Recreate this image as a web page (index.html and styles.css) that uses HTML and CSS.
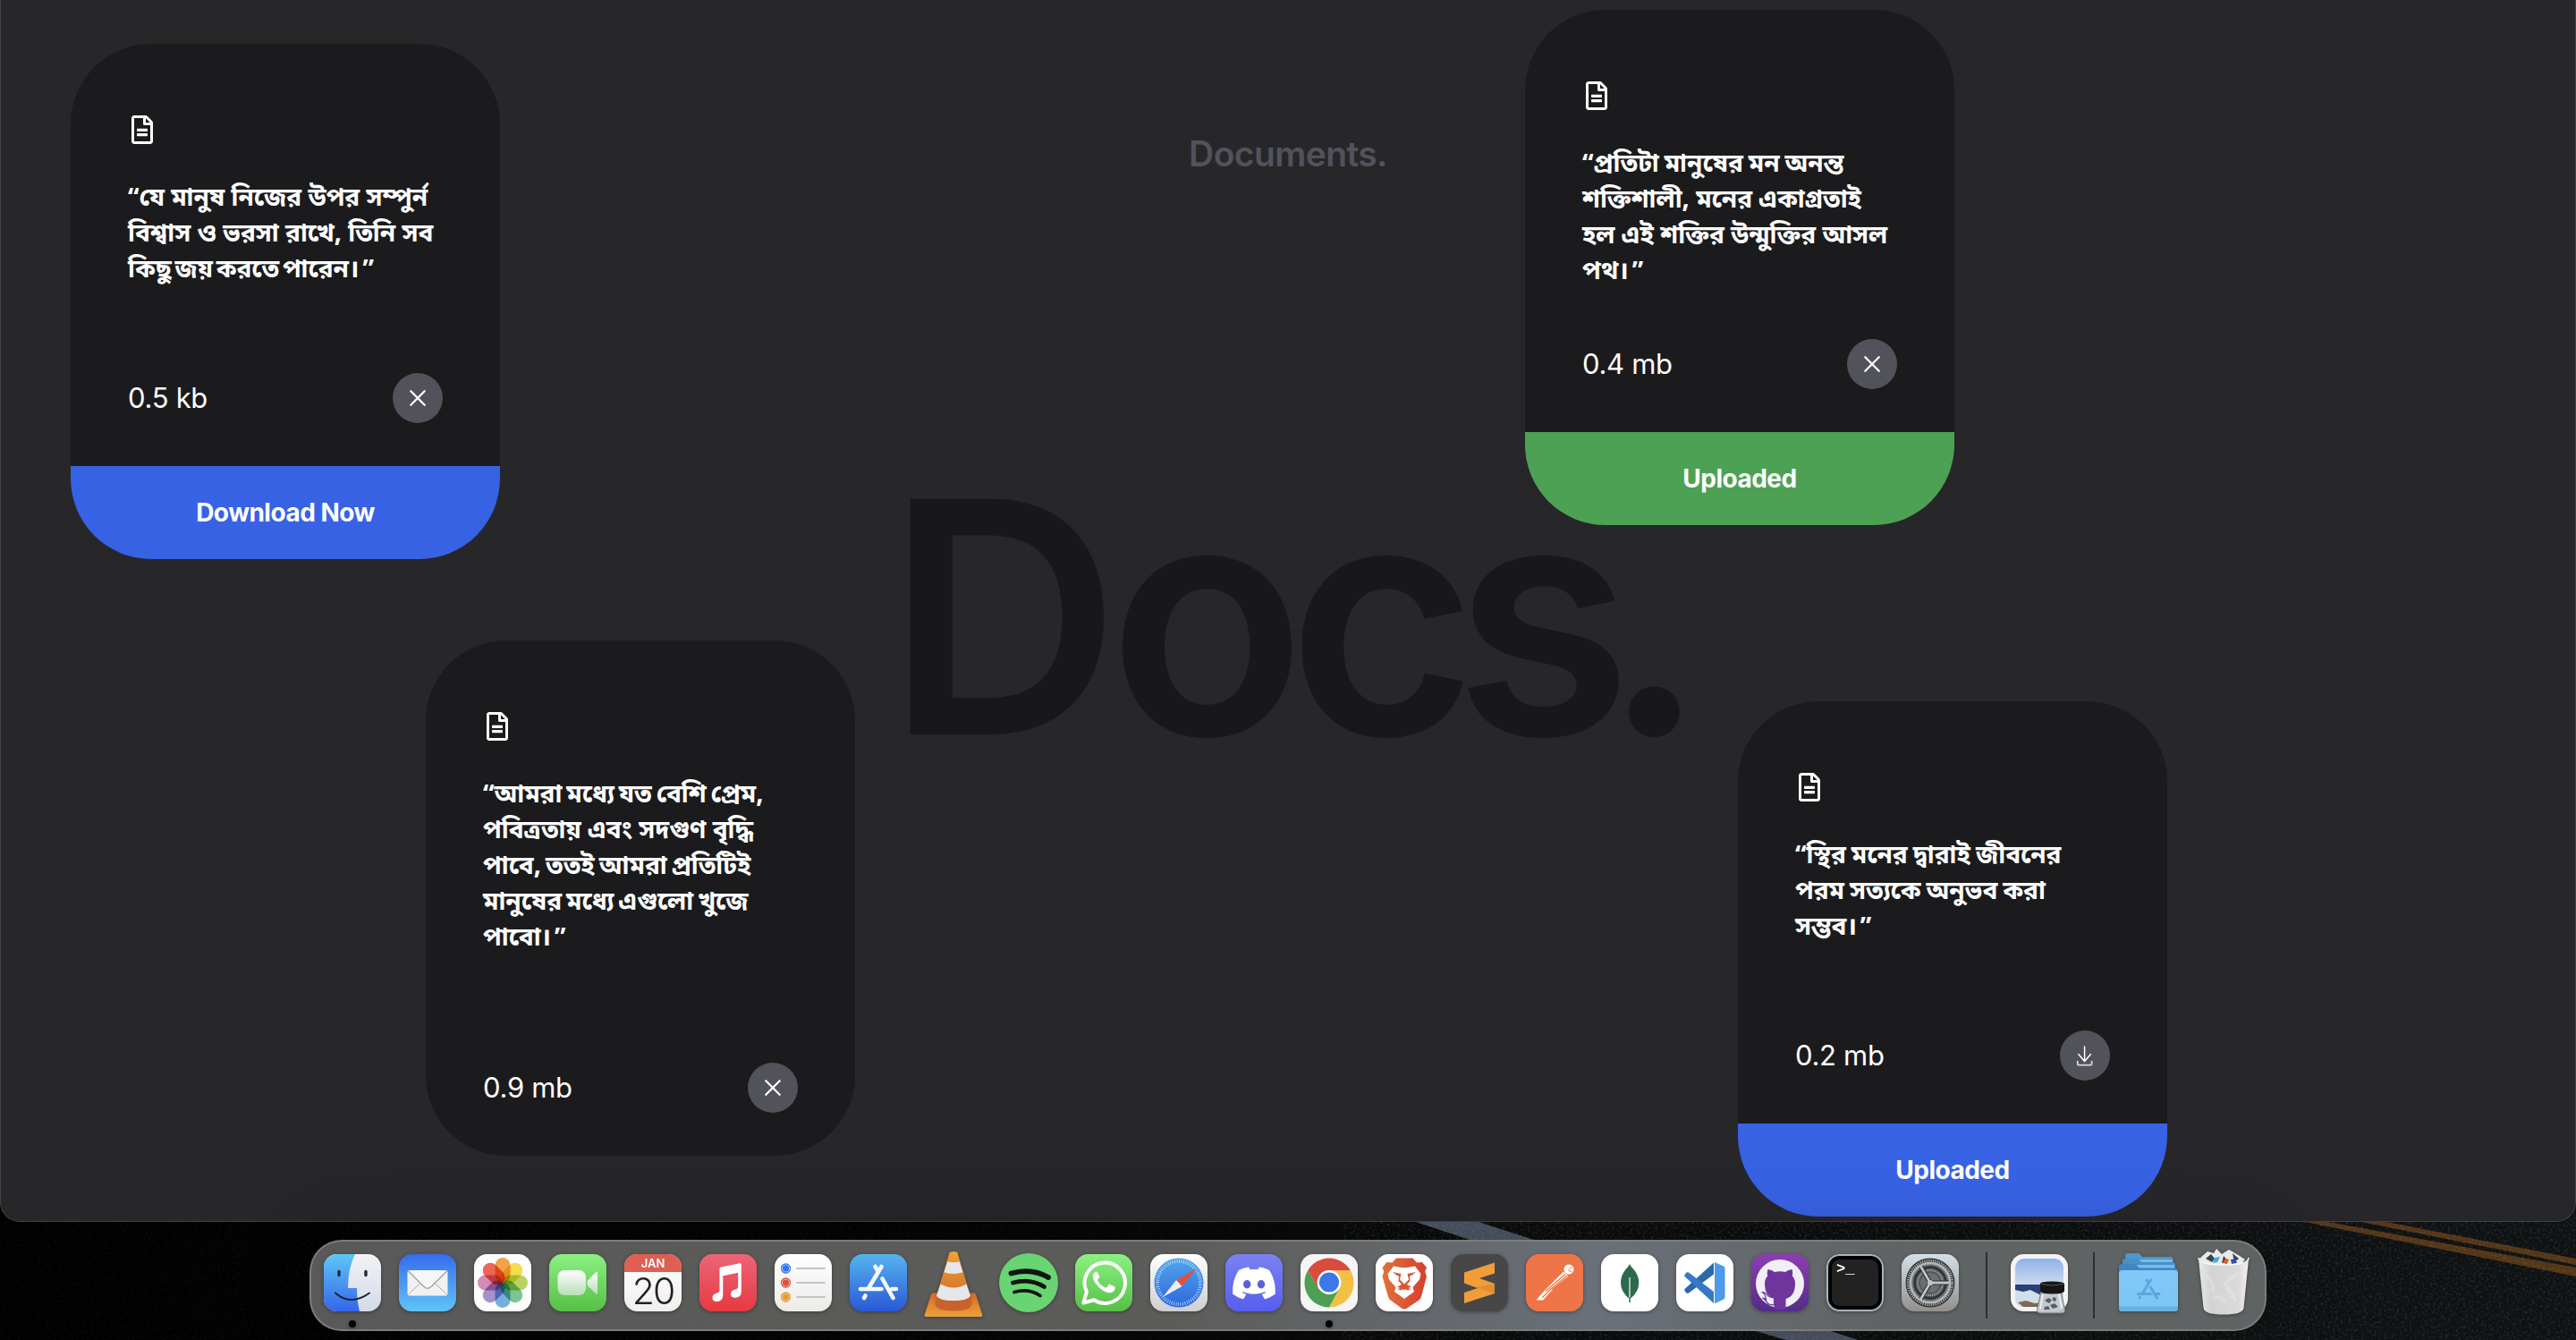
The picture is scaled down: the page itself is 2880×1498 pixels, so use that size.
FILE: index.html
```html
<!DOCTYPE html>
<html lang="en">
<head>
<meta charset="utf-8">
<title>Documents.</title>
<link rel="stylesheet" href="styles.css">
</head>
<body>
<svg class="defs" width="0" height="0" aria-hidden="true">
  <defs>
    <symbol id="file" viewBox="0 0 384 512"><path fill="currentColor" d="M288 248v28c0 6.600-5.400 12-12 12H108c-6.600 0-12-5.400-12-12v-28c0-6.600 5.400-12 12-12h168c6.600 0 12 5.400 12 12zm-12 72H108c-6.600 0-12 5.400-12 12v28c0 6.600 5.400 12 12 12h168c6.600 0 12-5.400 12-12v-28c0-6.600-5.400-12-12-12zm108-188.100V464c0 26.500-21.500 48-48 48H48c-26.500 0-48-21.500-48-48V48C0 21.500 21.500 0 48 0h204.100C264.800 0 277 5.100 286 14.100L369.900 98c9 8.900 14.100 21.200 14.100 33.900zm-128-80V128h76.100L256 51.900zM336 464V176H232c-13.300 0-24-10.700-24-24V48H48v416h288z"/></symbol>
    <symbol id="close" viewBox="0 0 36 36"><path d="M10.300 10.300 25.700 25.700M25.700 10.300 10.300 25.700" fill="none" stroke="currentColor" stroke-width="2.300" stroke-linecap="round"/></symbol>
    <symbol id="download" viewBox="0 0 36 36"><path d="M17.600 8v16.500M10.800 16.600l6.800 8 6.800-8" fill="none" stroke="currentColor" stroke-width="1.500" stroke-linecap="round" stroke-linejoin="round"/><path d="M9.800 24.600v2.900q0 1.200 1.200 1.200h13.400q1.200 0 1.200-1.200v-2.900" fill="none" stroke="#d8d8da" stroke-width="1.800" stroke-linecap="round"/></symbol>
    <linearGradient id="gFinderL" x2="0" y2="1"><stop stop-color="#5ec6f7"/><stop offset="1" stop-color="#3466ea"/></linearGradient>
    <linearGradient id="gFinderR" x2="0" y2="1"><stop stop-color="#f2f3f5"/><stop offset="1" stop-color="#d3daea"/></linearGradient>
    <linearGradient id="gMail" x2="0" y2="1"><stop stop-color="#376ceb"/><stop offset="1" stop-color="#5fc4f8"/></linearGradient>
    <linearGradient id="gGreen" x2="0" y2="1"><stop stop-color="#8bf082"/><stop offset="1" stop-color="#57bf46"/></linearGradient>
    <linearGradient id="gSoft" x2="0" y2="1"><stop stop-color="#fff"/><stop offset="1" stop-color="#b9ddb7"/></linearGradient>
    <linearGradient id="gPaper" x2="0" y2="1"><stop stop-color="#fff"/><stop offset="1" stop-color="#edebe8"/></linearGradient>
    <linearGradient id="gMusic" x2="0" y2="1"><stop stop-color="#ec6578"/><stop offset="1" stop-color="#e63a40"/></linearGradient>
    <linearGradient id="gStore" x2="0" y2="1"><stop stop-color="#56b4ee"/><stop offset="1" stop-color="#2a58d5"/></linearGradient>
    <linearGradient id="gCone" x2="0" y2="1"><stop stop-color="#f0a337"/><stop offset="1" stop-color="#cf6c2b"/></linearGradient>
    <linearGradient id="gBase" x2="0" y2="1"><stop stop-color="#d2692c"/><stop offset="1" stop-color="#eda03b"/></linearGradient>
    <linearGradient id="gSafari" x2="0" y2="1"><stop stop-color="#fff"/><stop offset="1" stop-color="#cfcfd1"/></linearGradient>
    <linearGradient id="gDial" x2="0" y2="1"><stop stop-color="#4fa5ea"/><stop offset="1" stop-color="#2f68de"/></linearGradient>
    <linearGradient id="gDiscord" x2="0" y2="1"><stop stop-color="#7c81f2"/><stop offset="1" stop-color="#565fee"/></linearGradient>
    <linearGradient id="gBrave" x2="1" y2="0"><stop stop-color="#e0713a"/><stop offset="1" stop-color="#d5402e"/></linearGradient>
    <linearGradient id="gGit" x2="0" y2="1"><stop stop-color="#8c3fb1"/><stop offset="1" stop-color="#552c88"/></linearGradient>
    <linearGradient id="gSettings" x2="0" y2="1"><stop stop-color="#d3e0e8"/><stop offset="1" stop-color="#93908d"/></linearGradient>
    <linearGradient id="gSky" x2="0" y2="1"><stop stop-color="#8fb1ea"/><stop offset="1" stop-color="#cddaee"/></linearGradient>
    <linearGradient id="gFolder" x2="0" y2="1"><stop stop-color="#80c9f8"/><stop offset="1" stop-color="#7cc6f6"/></linearGradient>
    <linearGradient id="gBin" x2="1" y2="0"><stop stop-color="#e9e9e9"/><stop offset=".25" stop-color="#d3d3d3"/><stop offset=".8" stop-color="#dcdad9"/><stop offset="1" stop-color="#f2f2f2"/></linearGradient>
    <linearGradient id="gRoad" x2="1" y2="0"><stop stop-color="#010101"/><stop offset=".4" stop-color="#050505"/><stop offset=".6" stop-color="#0b0c0d"/><stop offset="1" stop-color="#0f1213"/></linearGradient>
    <filter id="grain" x="0" y="0" width="100%" height="100%"><feTurbulence type="fractalNoise" baseFrequency=".35" numOctaves="2" seed="4"/><feColorMatrix values="0 0 0 0 .7  0 0 0 0 .75  0 0 0 0 .75  .9 0 0 0 -.42"/></filter>
  </defs>
</svg>

<svg class="wallpaper" viewBox="0 0 2880 158" preserveAspectRatio="none" aria-hidden="true">
  <rect width="2880" height="158" fill="url(#gRoad)"/>
  <path d="M1560 20 1583 26 1643 46 1715 46 1653 26 1630 20ZM1963 148 1997 158H2077L2047 148 2030 144H1950Z" fill="#4b5463"/>
  <path d="M2640 26h28L2880 67v7ZM2577 26h26L2880 77v10Z" fill="#533518"/>
  <rect x="1500" width="1380" height="158" filter="url(#grain)" opacity=".35"/>
  <rect width="1500" height="158" filter="url(#grain)" opacity=".1"/>
</svg>

<main class="window">
  <h1 class="title">Documents.</h1>
  <div class="backdrop"><span class="k1">D</span><span class="k2">o</span><span class="k3">c</span><span class="k4">s</span>.</div>

  <article class="card card-a">
    <div class="card-body">
      <svg class="file"><use href="#file"/></svg>
      <p class="quote">“যে মানুষ নিজের উপর সম্পুর্ন<br>বিশ্বাস ও ভরসা রাখে, তিনি সব<br><span class="tighter">কিছু জয় করতে পারেন।<span class="end">”</span></span></p>
      <div class="meta"><span class="size">0.5 kb</span><span class="action"><svg><use href="#close"/></svg></span></div>
    </div>
    <div class="tag blue">Download Now</div>
  </article>

  <article class="card card-b">
    <div class="card-body">
      <svg class="file"><use href="#file"/></svg>
      <p class="quote"><span class="snug">“প্রতিটা মানুষের মন অনন্ত</span><br>শক্তিশালী, মনের একাগ্রতাই<br>হল এই শক্তির উন্মুক্তির আসল<br>পথ।<span class="end">”</span></p>
      <div class="meta"><span class="size">0.4 mb</span><span class="action"><svg><use href="#close"/></svg></span></div>
    </div>
    <div class="tag green">Uploaded</div>
  </article>

  <article class="card card-c">
    <div class="card-body">
      <svg class="file"><use href="#file"/></svg>
      <p class="quote"><span class="tight">“আমরা মধ্যে যত বেশি প্রেম,</span><br>পবিত্রতায় এবং সদগুণ বৃদ্ধি<br><span class="tight">পাবে, ততই আমরা প্রতিটিই</span><br><span class="tight">মানুষের মধ্যে এগুলো খুজে</span><br>পাবো।<span class="end">”</span></p>
      <div class="meta"><span class="size">0.9 mb</span><span class="action"><svg><use href="#close"/></svg></span></div>
    </div>
  </article>

  <article class="card card-d">
    <div class="card-body">
      <svg class="file"><use href="#file"/></svg>
      <p class="quote"><span class="snug">“স্থির মনের দ্বারাই জীবনের</span><br><span class="snug">পরম সত্যকে অনুভব করা</span><br>সম্ভব।<span class="end">”</span></p>
      <div class="meta"><span class="size">0.2 mb</span><span class="action"><svg><use href="#download"/></svg></span></div>
    </div>
    <div class="tag blue">Uploaded</div>
  </article>
</main>

<nav class="dock">
  <!-- Finder -->
  <div class="app running"><svg viewBox="0 0 64 64"><rect width="64" height="64" rx="14.500" fill="url(#gFinderR)"/><path d="M35 0H14.500A14.500 14.500 0 0 0 0 14.500v35A14.500 14.500 0 0 0 14.500 64H40q-3-12-3-26H27q0-22 8-38Z" fill="url(#gFinderL)"/><path d="M17 19.500v4M47 19.500v4" stroke="#222b3a" stroke-width="3.400" stroke-linecap="round"/><path d="M13 43.500q17 15 38 0" fill="none" stroke="#1b2333" stroke-width="2" stroke-linecap="round"/></svg></div>
  <!-- Mail -->
  <div class="app"><svg viewBox="0 0 64 64"><rect width="64" height="64" rx="14.500" fill="url(#gMail)"/><rect x="9.500" y="18" width="45" height="28.500" rx="2.500" fill="#f1f1f1"/><path d="m10.500 45 14-13M53.500 45l-14-13" stroke="#aaa" stroke-width="1"/><path d="m10.500 19 17 17q4.500 4.500 9 0l17-17" fill="#f6f6f6" stroke="#a0a0a0" stroke-width="1.200"/></svg></div>
  <!-- Photos -->
  <div class="app"><svg viewBox="0 0 64 64"><rect width="64" height="64" rx="14.500" fill="#fdfdfd"/><g class="petals"><rect x="23.500" y="4" width="17" height="28" rx="8.500" fill="#f09a37"/><rect x="23.500" y="4" width="17" height="28" rx="8.500" fill="#f3da3a" transform="rotate(45 32 32)"/><rect x="23.500" y="4" width="17" height="28" rx="8.500" fill="#b2cf51" transform="rotate(90 32 32)"/><rect x="23.500" y="4" width="17" height="28" rx="8.500" fill="#6cbf87" transform="rotate(135 32 32)"/><rect x="23.500" y="4" width="17" height="28" rx="8.500" fill="#6aa6dd" transform="rotate(180 32 32)"/><rect x="23.500" y="4" width="17" height="28" rx="8.500" fill="#9a86c6" transform="rotate(225 32 32)"/><rect x="23.500" y="4" width="17" height="28" rx="8.500" fill="#cd7fb0" transform="rotate(270 32 32)"/><rect x="23.500" y="4" width="17" height="28" rx="8.500" fill="#eb5545" transform="rotate(315 32 32)"/></g></svg></div>
  <!-- FaceTime -->
  <div class="app"><svg viewBox="0 0 64 64"><rect width="64" height="64" rx="14.500" fill="url(#gGreen)"/><rect x="9.500" y="18" width="31.500" height="28" rx="7.500" fill="url(#gSoft)"/><path d="M43 29.500 52.500 20q1.500-1 1.500 1v22.500q0 2-1.500 1L43 35.500q-1-3 0-6Z" fill="url(#gSoft)"/></svg></div>
  <!-- Calendar -->
  <div class="app calendar"><span class="month">JAN</span><span class="day">20</span></div>
  <!-- Music -->
  <div class="app"><svg viewBox="0 0 64 64"><rect width="64" height="64" rx="14.500" fill="url(#gMusic)"/><path d="M22.500 16.500q0-1.500 1.500-2l21-4.200q1.800-.3 1.800 1.500v30.700q0 5.500-6.300 6.300-5.500.2-5.500-4.300 0-4 5-5.100 3.200-.6 3.200-2.900V20.700l-16.900 3.500V46q0 6-6.300 7-5.500.2-5.500-4.300 0-4 5-5.200 3-.7 3-3Z" fill="#fff"/></svg></div>
  <!-- Reminders -->
  <div class="app"><svg viewBox="0 0 64 64"><rect width="64" height="64" rx="14.500" fill="url(#gPaper)"/><g stroke="#c3c3c8" stroke-width="1.800" stroke-linecap="round"><path d="M25 16h31M25 32h31M25 48h31"/></g><g fill="none" stroke-width="1.300"><g stroke="#3274ee"><circle cx="12.500" cy="16" r="5"/><circle cx="12.500" cy="16" r="3" fill="#3274ee"/></g><g stroke="#dd4f3c"><circle cx="12.500" cy="32" r="5"/><circle cx="12.500" cy="32" r="3" fill="#dd4f3c"/></g><g stroke="#e69a37"><circle cx="12.500" cy="48" r="5"/><circle cx="12.500" cy="48" r="3" fill="#e69a37"/></g></g></svg></div>
  <!-- App Store -->
  <div class="app"><svg viewBox="0 0 64 64"><rect width="64" height="64" rx="14.500" fill="url(#gStore)"/><g stroke="#f4f8ff" stroke-width="4.600" stroke-linecap="round"><path d="M35.500 14 20.500 39M28.500 14l3 5M17.500 46.500l-1.500 2.500M12 39h23.500M47 39h5M36.500 27.500 48.500 49"/></g></svg></div>
  <!-- VLC -->
  <div class="app"><svg viewBox="0 0 64 64"><path d="M9 43.500h46q1.500 0 2 1.500l7.300 23q.5 2-1.500 2H1.200q-2 0-1.500-2L7 45q.5-1.500 2-1.500Z" fill="url(#gBase)"/><path d="M11.500 45v10q0 8.500 20.500 8.500T52.500 55V45Z" fill="#c9622a"/><path d="M27.500-1.500Q28-3 32-3t4.500 1.500L51 46.500Q48 52 32 52t-19-5.500Z" fill="url(#gCone)"/><path d="M25.400 8.500q6.600 1.500 13.200 0l3.900 11.700q-10.500 3.500-21 0ZM17.600 33.500Q32 41.500 46.400 33.500L51 46.500Q48 52 32 52t-19-5.500Z" fill="#e6e7ea"/></svg></div>
  <!-- Spotify -->
  <div class="app"><svg viewBox="0 0 64 64"><circle cx="32" cy="32" r="33" fill="#68d472"/><g fill="none" stroke="#101510" stroke-linecap="round"><path d="M12.500 21.500q23-6.500 41.500 4.500" stroke-width="5.800"/><path d="M14.500 32q19-5.500 35 4.500" stroke-width="4.800"/><path d="M16 42.500q16-4.500 29 4" stroke-width="3.800"/></g></svg></div>
  <!-- WhatsApp -->
  <div class="app"><svg viewBox="0 0 64 64"><rect width="64" height="64" rx="14.500" fill="url(#gGreen)"/><path d="m9.300 54.500 3.600-12.300A22.700 22.700 0 1 1 21 51.300Z" fill="none" stroke="#fff" stroke-width="4" stroke-linejoin="round"/><path d="M25 20.500c-1-1.500-3-.8-4 .7-2 3-1 6.500.5 9.300 3.500 6 8 10 14 12.200 3.500 1.200 7 .3 8.700-2.700.8-2 .7-3 0-3.500l-5-2.600c-1-.4-1.500-.1-2.200.8l-1.700 2.300c-.6.7-1.200.8-2 .3-3.500-1.700-6-4-8-7.500-.4-.7-.2-1.200.3-1.800l1.400-1.900c.4-.6.3-1 .1-1.600Z" fill="#fff"/></svg></div>
  <!-- Safari -->
  <div class="app"><svg viewBox="0 0 64 64"><rect width="64" height="64" rx="14.500" fill="url(#gSafari)"/><circle cx="32" cy="32" r="27.500" fill="url(#gDial)"/><circle cx="32" cy="32" r="24" fill="none" stroke="#fff" stroke-width="4" stroke-opacity=".7" stroke-dasharray=".8 1.700"/><path d="M51.500 16 35.500 36 29 29Z" fill="#e0523f"/><path d="M14 48 29 29l6.500 7Z" fill="#eceef2"/></svg></div>
  <!-- Discord -->
  <div class="app"><svg viewBox="0 0 64 64"><rect width="64" height="64" rx="14.500" fill="url(#gDiscord)"/><path d="M26 14.500c-4 .6-7.500 1.700-11 3.500C10 25.500 7.700 34 8.200 44.500c4 3 8 4.800 12 5.800l3-5.200-4.300-2.200 1-1c8 3.600 16.200 3.600 24.200 0l1 1-4.300 2.200 3 5.200c4-1 8-2.800 12-5.800C56.300 34 54 25.500 49 18c-3.500-1.800-7-2.900-11-3.500l-1.800 2.700a33 33 0 0 0-8.400 0Z" fill="#fff"/><ellipse cx="24.200" cy="33.700" rx="4.200" ry="4.700" fill="#5a61d6"/><ellipse cx="40" cy="33.700" rx="4.200" ry="4.700" fill="#5a61d6"/></svg></div>
  <!-- Chrome -->
  <div class="app running"><svg viewBox="0 0 64 64"><rect width="64" height="64" rx="14.500" fill="#f5f5f5"/><path d="M8.200 18.200A27.500 27.500 0 0 0 32 59.500L43.700 38.500 20.300 38.700Z" fill="#4c9f53"/><path d="M55.800 18.200A27.500 27.500 0 0 1 32 59.500L43.700 38.700 32 18.200Z" fill="#f3c044"/><path d="M32 18.200h23.800A27.500 27.500 0 0 0 8.200 18.200l12 20.600Z" fill="#d94b3c"/><circle cx="32" cy="31.500" r="13.400" fill="#fff"/><circle cx="32" cy="31.500" r="11" fill="#3c78e7"/></svg></div>
  <!-- Brave -->
  <div class="app"><svg viewBox="0 0 64 64"><rect width="64" height="64" rx="14.500" fill="#fff"/><path d="M23 4.500h18.500l4.500 5 6-.5 5 6-1.800 4.500 1.800 5.500-6 22.500q-.7 2.700-3 4.300L35 60.500q-3 2-6 0L17 51.800q-2.300-1.600-3-4.300L7.500 25l1.800-5.500L7.500 15l5-6 6 .5Z" fill="url(#gBrave)"/><path d="m20 13.500 7 1.300q5 .8 10 0l7-1.300 6.500 8.500-1.500 6.500-7.500 8.500 1.500 5L32 50l-11-8 1.500-5-7.500-8.500L13.500 22Z" fill="#fff"/><path d="m19 20 9.500 2-1.500 6.500 5 5 5-5-1.500-6.500 9.500-2-5 4-2 .5.500 5.500-3.500 4 5 2.500L32 40l-8-3.500 5-2.500-3.500-4 .5-5.500-2-.5ZM24 39l8-2 8 2-4.500 1.500L32 38l-3.500 2.500Z" fill="#dc5535"/></svg></div>
  <!-- Sublime Text -->
  <div class="app"><svg viewBox="0 0 64 64"><rect width="64" height="64" rx="14.500" fill="#474747"/><path d="m15 20.500 34-11v12L32 27l17 6v11L15 55V43l15-5-15-5.500Z" fill="#f29d38"/><path d="m28.500 37.500 6-1.800L49 33v11Z" fill="#d6842e" opacity=".6"/></svg></div>
  <!-- Postman -->
  <div class="app"><svg viewBox="0 0 64 64"><rect width="64" height="64" rx="14.500" fill="#ee7547"/><circle cx="48" cy="17" r="5.500" fill="#fff"/><path d="m48 17 4-3M47 18l4.500 2" stroke="#ee7547" stroke-width="1"/><path d="M42 20.500 22 40.500 30 37.500 46.500 24.500ZM21.500 41 12.500 51h6L29 39.500Z" fill="#fff" stroke="#fff" stroke-width="1.200" stroke-linejoin="round"/><path d="M44 22.500 22 41.500M46 24 27 40M18 49l10-10" stroke="#ee7547" stroke-width="1.300"/></svg></div>
  <!-- MongoDB -->
  <div class="app"><svg viewBox="0 0 64 64"><rect width="64" height="64" rx="14.500" fill="#fff"/><path d="M32 11q1 2.500 4 5.500 6.300 7 6.300 15.500 0 10-9.300 17.500H31.200Q22 42 22 32q0-8.500 6-15.500 3-3 4-5.500Z" fill="#2d6a4c"/><path d="M32 26v28" stroke="#c9d9cf" stroke-width="1.600"/><path d="M32 48v6" stroke="#4f8a68" stroke-width="1.800"/></svg></div>
  <!-- VS Code -->
  <div class="app"><svg viewBox="0 0 64 64"><rect width="64" height="64" rx="14.500" fill="#fff"/><path d="m42 9.500v13L14 43.500q-1.500.8-2.800-.3L9.500 41q-.8-1.200.3-2.300Z" fill="#2b69ac"/><path d="m42 55V42L14 20.500q-1.500-.8-2.800.3L9.500 23q-.8 1.200.3 2.300Z" fill="#3579c8"/><path d="m43 9 10 4.500q1.500.7 1.500 2.300v32.500q0 1.600-1.500 2.300L43 55.300V9Z" fill="#4b9bea"/></svg></div>
  <!-- GitHub Desktop -->
  <div class="app"><svg viewBox="0 0 64 64"><rect width="64" height="64" rx="14.500" fill="url(#gGit)"/><circle cx="32" cy="33" r="27" fill="#efeff5"/><path d="M25.500 61V50Q15 47 15 33q0-5 3.200-8.500-1-3.500.2-7.500 4.500.5 7.600 3 6-1.600 12 0 3-2.500 7.600-3 1.200 4 .2 7.500Q49 28 49 33q0 14-10.500 17v11Q32 63 25.500 61Z" fill="#6f359d"/><path d="M12.500 42.500q3 0 5 3t8 3.500v7.500q-6 1-8-2.500t-5-5q2 0 4 1.500-1-6-4-8Z" fill="#efeff5" stroke="#6f359d" stroke-width="1.200"/></svg></div>
  <!-- Terminal -->
  <div class="app terminal"><span class="prompt">&gt;_</span></div>
  <!-- System Settings -->
  <div class="app"><svg viewBox="0 0 64 64"><rect width="64" height="64" rx="14.500" fill="url(#gSettings)"/><circle cx="32" cy="32" r="27.500" fill="#2f3234"/><circle cx="32" cy="32" r="24.500" fill="none" stroke="#a3a7a9" stroke-width="3.500" stroke-dasharray="1.300 1.100"/><circle cx="32" cy="32" r="22" fill="#6d7173" stroke="#b2b6b8" stroke-width="2.600"/><circle cx="32" cy="32" r="17.500" fill="#53575a" stroke="#303335" stroke-width="2.500"/><circle cx="32" cy="32" r="14" fill="none" stroke="#a3a7a9" stroke-width="2" stroke-dasharray="1.300 1"/><circle cx="32" cy="32" r="11" fill="#6b6f71"/><g stroke="#2b2e30" stroke-width="5"><path d="M32 32h21M32 32 21.500 13.800M32 32 21.500 50.200"/></g><g stroke="#bfc3c5" stroke-width="2.800"><path d="M32 32h22M32 32 21 13M32 32 21 51"/></g><circle cx="32" cy="32" r="3" fill="#bfc3c5"/></svg></div>
  <span class="divider"></span>
  <!-- Preview -->
  <div class="app"><svg viewBox="0 0 64 64"><rect width="64" height="64" rx="14.500" fill="#f4f3f2"/><rect x="5" y="5" width="54" height="54" rx="10" fill="#e8eef5"/><path d="M5 34V15A10 10 0 0 1 15 5h34a10 10 0 0 1 10 10v19Z" fill="url(#gSky)"/><path d="M5 34h54v11H5Z" fill="#2a3f78"/><path d="m5 40 9 2 8-2 10 5 27-4v13q0 5-5 5H15Q5 59 5 50Z" fill="#cfe0ea"/><path d="m8 54 9-2 10 3 8-1v5H14Z" fill="#7d6a50"/><path d="M34 41h22l4.500 21q.5 4-4 4H33.500q-4.500 0-4-4Z" fill="#c3c8c9" fill-opacity=".93" stroke="#747a7c"/><path d="M36 45 33 61M54 45l3 16" stroke="#f5f7f7" stroke-width="1.500"/><path d="m38 52 4-3 4 2-3 4Zm6 5 5-2 4 4-6 2Zm-6 2 4-1 2 4h-7ZM47 48l4 1-1 4-3-1Z" fill="#55606b"/><path d="M33 33q0-2.500 13-2.500T60 33v8q0 3.500-13.500 3.500T33 41Z" fill="#161616"/><path d="M34 33.500q12 3 25 0" fill="none" stroke="#555"/></svg></div>
  <span class="divider second"></span>
  <!-- Applications folder -->
  <div class="app"><svg viewBox="0 0 64 64"><path d="M6 2q0-3 3-3h11q2 0 3.500 2l1.500 2h32q2.500 0 2.500 3v10H6Z" fill="#4f96cc"/><rect x="8" y="6" width="51" height="10" fill="#74bdec"/><path d="M3 8q0-3 3-3h13q2 0 3.500 2l1.500 2h35q3 0 3 3v10H3Z" fill="#4a90c8"/><rect x="5" y="12" width="56" height="8" fill="#74bdec"/><path d="M-1 14q0-3 3-3h14q2 0 3.500 2l2 2.500H62q3 0 3 3V24H-1Z" fill="#3f86c2"/><rect x="-1" y="18" width="66" height="46" rx="4" fill="url(#gFolder)"/><path d="M-1 58.500h66V60q0 4-4 4H3q-4 0-4-4Z" fill="#68b2e2"/><g stroke="#5aa6dc" stroke-width="3" stroke-linecap="round"><path d="M34.500 29 25 44.500M30 29l2 3.500M22.500 48l-.5 1M20.500 44.500h14.500M41 44.500h3M34.500 37l7 12"/></g></svg></div>
  <!-- Trash -->
  <div class="app"><svg viewBox="0 0 64 64"><path d="M5 5 14-3l7 2 3-5 6 6 8-5 7 4 5 3 6 4-5 6H8Z" fill="#e9e9e9"/><path d="m12 5 6-5 4 5-3 4Zm20-3 5 6-7 2Zm10-3 7 6-5 4Z" fill="#3d4348"/><path d="m22 4 6-1-3 6-5 1Z" fill="#39aee0"/><path d="m34 5 4 1-2 5-5-1Z" fill="#d0652f"/><path d="m40 6 5-1 2 5-6 1Z" fill="#2f55a0"/><path d="M4 5Q4 12 32 12T60 5L54.500 60q-.7 7.500-22.500 7.500T9.500 60Z" fill="url(#gBin)"/><path d="M4 4Q4 12 32 12T60 4" fill="none" stroke="#fafafa" stroke-width="1.500"/><path d="M14 24q8 8 6 20M48 22q-14 8-14 12 6 10 12 18M20 50q8-6 14 4" fill="none" stroke="#fff" stroke-opacity=".18" stroke-width="4"/></svg></div>
</nav>
</body>
</html>
```
FILE: styles.css
```css
* { box-sizing: border-box; }

body {
  margin: 0;
  width: 2880px;
  height: 1498px;
  overflow: hidden;
  background: #000;
  color: #fff;
  font-family: Inter, "Liberation Sans", sans-serif;
  display: flex;
  flex-direction: column;
  align-items: center;
  position: relative;
}

.defs { position: absolute; }

.wallpaper {
  position: absolute;
  left: 0;
  bottom: 0;
  width: 2880px;
  height: 158px;
}

/* Browser window */
.window {
  position: relative;
  flex: none;
  width: 2880px;
  height: 1366px;
  background: #27272a;
  border: 1px solid #424245;
  border-top: 0;
  border-radius: 0 0 22px 22px;
  display: flex;
  flex-direction: column;
  align-items: center;
}

.title {
  margin: 144px 0 0;
  font-size: 39px;
  line-height: 56px;
  font-weight: 600;
  letter-spacing: -.6px;
  color: #52525b;
}

.backdrop {
  margin-top: 357px;
  font-size: 362px;
  line-height: 264px;
  font-weight: 600;
  letter-spacing: -18px;
  color: #18181b;
}
.k1 { letter-spacing: -13px; }
.k2 { letter-spacing: -20px; }
.k3 { letter-spacing: -25px; }
.k4 { letter-spacing: -33px; }

/* Draggable cards */
.card {
  position: absolute;
  width: 480px;
  height: 576px;
  border-radius: 90px;
  background: #1b1b1d;
  overflow: hidden;
  display: flex;
  flex-direction: column;
}
.card-a { left: 78px; top: 49px; }
.card-b { left: 1704px; top: 11px; }
.card-c { left: 475px; top: 716px; }
.card-d { left: 1942px; top: 784px; }

.card-body {
  flex: 1;
  padding: 80px 64px 48px;
  display: flex;
  flex-direction: column;
}

.file { width: 32px; height: 32px; flex: none; }

.quote {
  margin: 42px 0 0;
  font-family: "Noto Sans Bengali", "Noto Sans", sans-serif;
  font-size: 28px;
  line-height: 40px;
  font-weight: 700;
  white-space: nowrap;
}
.snug { word-spacing: -1.300px; }
.tight { word-spacing: -2.300px; }
.tighter { word-spacing: -3.600px; }
.end { margin-left: 4px; }

.meta {
  margin-top: auto;
  display: flex;
  align-items: center;
  justify-content: space-between;
}
.size { font-size: 31px; line-height: 48px; letter-spacing: -.3px; }

.action {
  width: 56px;
  height: 56px;
  border-radius: 50%;
  background: #52525b;
  display: flex;
  align-items: center;
  justify-content: center;
}
.action svg { width: 36px; height: 36px; }

.tag {
  flex: none;
  height: 104px;
  display: flex;
  align-items: center;
  justify-content: center;
  font-size: 28px;
  font-weight: 650;
  letter-spacing: -.5px;
}
.blue { background: #3862e4; }
.green { background: #4da154; }

/* Dock */
.dock {
  position: relative;
  flex: none;
  margin-top: 20px;
  height: 102px;
  padding: 14px 14px 0;
  border: 2px solid rgba(255, 255, 255, .18);
  border-radius: 36px;
  background: linear-gradient(90deg, #595959 0%, #5c5c5a 44%, #6a7079 66%, #606465 80%, #5f6364 100%) padding-box, #5f6060 border-box;
  box-shadow: 0 0 80px rgba(0, 0, 0, .22);
  display: flex;
  gap: 20px;
}

.app {
  position: relative;
  flex: none;
  width: 64px;
  height: 64px;
  filter: drop-shadow(0 1px 2px rgba(0, 0, 0, .35));
}
.app svg { display: block; width: 64px; height: 64px; overflow: visible; }

.running::after {
  content: "";
  position: absolute;
  left: 28px;
  top: 74px;
  width: 8px;
  height: 8px;
  border-radius: 50%;
  background: #000;
}

.petals { opacity: .98; }
.petals rect { mix-blend-mode: multiply; opacity: .92; }

.calendar {
  border-radius: 14.500px;
  background: linear-gradient(#fff, #f0efed);
  display: flex;
  flex-direction: column;
  align-items: center;
}
.month {
  width: 100%;
  height: 20px;
  border-radius: 14.500px 14.500px 0 0;
  background: #df5f52;
  font-size: 13px;
  line-height: 21px;
  font-weight: 600;
  text-align: center;
}
.day {
  font-size: 41px;
  line-height: 42px;
  font-weight: 300;
  letter-spacing: -2px;
  color: #222;
}

.terminal {
  border-radius: 14.500px;
  background: #222;
  border: 3px solid #050505;
  box-shadow: inset 0 0 0 3px #000;
  outline: 2px solid #a9b5bb;
  outline-offset: -2px;
  padding: 4px 0 0 8px;
}
.prompt {
  display: block;
  font-family: "Liberation Mono", monospace;
  font-size: 17px;
  line-height: 20px;
  font-weight: 700;
}

.divider {
  flex: none;
  width: 2px;
  height: 74px;
  margin: -2px 6px 0 10px;
  background: #2c2f31;
}
.divider.second { margin: -2px 8px 0; }
```
